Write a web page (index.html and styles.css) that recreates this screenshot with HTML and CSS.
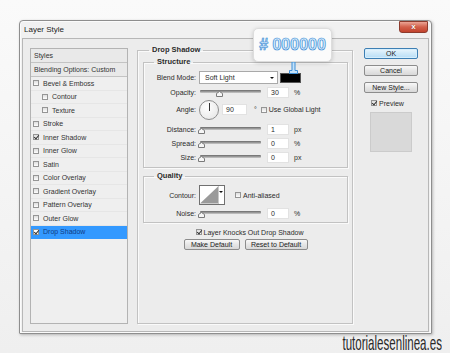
FILE: index.html
```html
<!DOCTYPE html>
<html lang="en">
<head>
  <meta charset="UTF-8">
  <meta name="viewport" content="width=device-width, initial-scale=1.0">
  <link rel="stylesheet" href="styles.css">
  <title>Layer Style</title>
</head>
<body>

<div class="window">
  <div class="titlebar">
    <span class="title">Layer Style</span>
    <span class="close">x</span>
  </div>

  <div class="client">
    <ul class="styles">
      <li class="head">Styles</li>
      <li class="head">Blending Options: Custom</li>
      <li><span class="cb"></span>Bevel &amp; Emboss</li>
      <li class="sub"><span class="cb"></span>Contour</li>
      <li class="sub"><span class="cb"></span>Texture</li>
      <li><span class="cb"></span>Stroke</li>
      <li><span class="cb on"></span>Inner Shadow</li>
      <li><span class="cb"></span>Inner Glow</li>
      <li><span class="cb"></span>Satin</li>
      <li><span class="cb"></span>Color Overlay</li>
      <li><span class="cb"></span>Gradient Overlay</li>
      <li><span class="cb"></span>Pattern Overlay</li>
      <li><span class="cb"></span>Outer Glow</li>
      <li class="selected"><span class="cb on"></span>Drop Shadow</li>
    </ul>

    <fieldset class="group main">
      <legend>Drop Shadow</legend>

      <fieldset class="group inner structure">
        <legend>Structure</legend>

        <div class="row blend">
          <label>Blend Mode:</label>
          <div class="select">Soft Light<span class="arrow"></span></div>
          <span class="swatch"></span>
        </div>

        <div class="row">
          <label>Opacity:</label>
          <div class="slider">
            <svg class="thumb" style="left: 30%" width="7" height="6" viewBox="0 0 7 6"><path d="M0.5 5.5V2.5L3.5 0.5L6.5 2.5V5.5Z" fill="#f6f6f6" stroke="#7a7a7a"/></svg>
          </div>
          <span class="num">30</span>
          <span class="unit">%</span>
        </div>

        <div class="row angle">
          <label>Angle:</label>
          <span class="dial"></span>
          <span class="num wide">90</span>
          <span class="deg">°</span>
          <span class="cb"></span><span class="cb-text">Use Global Light</span>
        </div>

        <div class="row distance">
          <label>Distance:</label>
          <div class="slider">
            <svg class="thumb" style="left: 0%" width="7" height="6" viewBox="0 0 7 6"><path d="M0.5 5.5V2.5L3.5 0.5L6.5 2.5V5.5Z" fill="#f6f6f6" stroke="#7a7a7a"/></svg>
          </div>
          <span class="num">1</span>
          <span class="unit">px</span>
        </div>

        <div class="row spread">
          <label>Spread:</label>
          <div class="slider">
            <svg class="thumb" style="left: 0%" width="7" height="6" viewBox="0 0 7 6"><path d="M0.5 5.5V2.5L3.5 0.5L6.5 2.5V5.5Z" fill="#f6f6f6" stroke="#7a7a7a"/></svg>
          </div>
          <span class="num">0</span>
          <span class="unit">%</span>
        </div>

        <div class="row size">
          <label>Size:</label>
          <div class="slider">
            <svg class="thumb" style="left: 0%" width="7" height="6" viewBox="0 0 7 6"><path d="M0.5 5.5V2.5L3.5 0.5L6.5 2.5V5.5Z" fill="#f6f6f6" stroke="#7a7a7a"/></svg>
          </div>
          <span class="num">0</span>
          <span class="unit">px</span>
        </div>
      </fieldset>

      <fieldset class="group inner quality">
        <legend>Quality</legend>

        <div class="row contour">
          <label>Contour:</label>
          <span class="curve">
            <svg width="19" height="18" viewBox="0 0 19 18"><path d="M0 18L19 0V18Z" fill="#9a9a9a"/></svg>
            <span class="arrow"></span>
          </span>
          <span class="cb"></span><span class="cb-text">Anti-aliased</span>
        </div>

        <div class="row noise">
          <label>Noise:</label>
          <div class="slider">
            <svg class="thumb" style="left: 0%" width="7" height="6" viewBox="0 0 7 6"><path d="M0.5 5.5V2.5L3.5 0.5L6.5 2.5V5.5Z" fill="#f6f6f6" stroke="#7a7a7a"/></svg>
          </div>
          <span class="num">0</span>
          <span class="unit">%</span>
        </div>
      </fieldset>

      <div class="knock">
        <span class="cb on"></span><span class="cb-text">Layer Knocks Out Drop Shadow</span>
      </div>

      <div class="defaults">
        <button class="btn make">Make Default</button>
        <button class="btn reset">Reset to Default</button>
      </div>
    </fieldset>

    <div class="side">
      <button class="btn ok">OK</button>
      <button class="btn">Cancel</button>
      <button class="btn">New Style...</button>
      <div class="preview-check">
        <span class="cb on"></span><span class="cb-text">Preview</span>
      </div>
      <div class="preview"></div>
    </div>
  </div>

  <div class="tip">
    # 000000
    <svg class="pointer" width="9" height="12" viewBox="0 0 9 12"><path d="M3 0H6V8.5H8.5V11.5H0.5V8.5H3Z" fill="#c4e2fa" stroke="#3f8fd6"/></svg>
  </div>
</div>

<div class="credit"><span>tutorialesenlinea.es</span></div>

</body>
</html>
```

FILE: styles.css
```css
* {
  box-sizing: border-box;
}

body {
  margin: 0;
  height: 353px;
  overflow: hidden;
  padding-top: 20px;
  background: linear-gradient(#fafafa, #efefef);
  font-family: 'Liberation Sans', Arial, sans-serif;
  font-size: 7px;
  color: #2b2b2b;
}

.window {
  position: relative;
  margin-left: 19px;
  width: 413px;
  height: 314px;
  border: 1px solid #8e8e8e;
  border-radius: 4px 4px 1px 1px;
  background: #f1f1f1;
  box-shadow: 1px 1px 3px rgba(0, 0, 0, 0.25), inset 0 0 0 1px #fbfbfb;
  display: flex;
  flex-direction: column;
}

.titlebar {
  height: 17px;
  display: flex;
  justify-content: space-between;
  align-items: flex-start;
  padding: 0 3px 0 4px;
}

.title {
  font-size: 8px;
  line-height: 17px;
  color: #1e1e1e;
}

.close {
  width: 29px;
  height: 12px;
  border: 1px solid #8d3b2d;
  border-radius: 0 0 3px 3px;
  background: linear-gradient(#eba595, #d2604b 50%, #c2432d);
  color: #fff;
  font-weight: bold;
  font-size: 8px;
  line-height: 9px;
  text-align: center;
  text-shadow: 0 0 1px #6b1d10;
}

.client {
  flex: 1;
  margin: 0 2px 1px 2px;
  border: 1px solid #b7b7b7;
  background: #ececec;
  display: flex;
  padding: 9px 8px 7px 7px;
}

/* styles list */
.styles {
  list-style: none;
  margin: 0;
  padding: 0;
  width: 98px;
  border: 1px solid #b3b3b3;
  background: #efefef;
  color: #333;
}

.styles li {
  height: 13.5px;
  display: flex;
  align-items: center;
  padding-left: 2px;
  border-bottom: 1px solid #e6e6e6;
}

.styles li.head {
  height: 14px;
  padding-left: 3px;
  background: #e9e9e9;
  border-bottom: 1px solid #c3c3c3;
}

.styles li.sub {
  padding-left: 11px;
}

.styles li .cb {
  margin-right: 4px;
}

.styles li.selected {
  background: #3399ff;
  color: #113c84;
  border-bottom-color: #3399ff;
}

.cb {
  position: relative;
  display: inline-block;
  width: 6px;
  height: 6px;
  flex: none;
  border: 1px solid #959595;
  background: linear-gradient(#dedede, #fdfdfd);
}

.cb.on::after {
  content: '';
  position: absolute;
  left: 1px;
  top: -1px;
  width: 2px;
  height: 4px;
  border-right: 1px solid #333;
  border-bottom: 1px solid #333;
  transform: rotate(40deg);
}

.selected .cb {
  background: #fff;
}

.cb-text {
  margin-left: 2px;
}

/* group boxes */
fieldset.group {
  margin: 0;
  min-width: 0;
  border: 1px solid #c2c2c2;
  box-shadow: 1px 1px 0 #fafafa, inset 1px 1px 0 #fafafa;
}

fieldset.group legend {
  padding: 0 3px;
  font-weight: bold;
  font-size: 7.5px;
  line-height: 10px;
}

.main {
  width: 216px;
  margin: -3px 0 0 9px !important;
  padding: 0 4px 0 5px;
}

.main > legend {
  margin-left: 6px;
}

.inner {
  padding: 4px 0 4px 0;
}

.inner > legend {
  margin-left: 10px;
}

.structure {
  margin-top: 2px !important;
}

.quality {
  margin-top: 3px !important;
  padding-bottom: 3px;
}

.row {
  display: flex;
  align-items: center;
  height: 12px;
  margin-bottom: 1px;
}

.row label {
  width: 52px;
  margin-right: 3px;
  text-align: right;
}

.row.blend {
  height: 13px;
  margin-bottom: 2px;
}

.row.angle {
  height: 21px;
  margin-top: 1px;
  margin-bottom: 3px;
}

.row.distance,
.row.spread {
  margin-bottom: 2px;
}

.row.size,
.row.noise {
  margin-bottom: 0;
}

.row.contour {
  height: 20px;
  margin-bottom: 2px;
}

.select {
  position: relative;
  width: 79px;
  height: 13px;
  border: 1px solid #a9a9a9;
  background: #fff;
  padding-left: 5px;
  line-height: 11px;
}

.arrow {
  position: absolute;
  right: 3px;
  top: 5px;
  border-left: 2px solid transparent;
  border-right: 2px solid transparent;
  border-top: 2px solid #111;
}

.swatch {
  width: 21px;
  height: 10px;
  margin-left: 2px;
  background: #000;
  border: 1px solid #555;
}

.slider {
  position: relative;
  width: 61px;
  height: 12px;
  margin-left: 1px;
}

.slider::before {
  content: '';
  position: absolute;
  left: 0;
  right: 0;
  top: 4px;
  height: 3px;
  border-radius: 1px;
  background: linear-gradient(#6a6a6a, #a0a0a0 60%, #cdcdcd);
}

.thumb {
  position: absolute;
  top: 5px;
  margin-left: -2px;
}

.num {
  width: 22px;
  height: 11px;
  margin-left: 6px;
  padding-left: 3px;
  line-height: 9px;
  color: #2b2b2b;
  background: #fff;
  border: 1px solid #e2e2e2;
}

.num.wide {
  width: 25px;
  margin-left: 3px;
}

.unit {
  margin-left: 5px;
}

.dial {
  position: relative;
  width: 20px;
  height: 20px;
  border-radius: 50%;
  border: 1px solid #8e8e8e;
  background: radial-gradient(circle at 40% 35%, #fff, #e3e3e3);
}

.dial::after {
  content: '';
  position: absolute;
  left: 9px;
  top: 2px;
  width: 1px;
  height: 8px;
  background: #333;
}

.deg {
  margin-left: 7px;
  margin-right: 4px;
}

.curve {
  position: relative;
  display: flex;
  width: 26px;
  height: 20px;
  border: 1px solid #707070;
  background: #fff;
}

.curve .arrow {
  top: 5px;
  right: 1px;
}

.curve svg {
  border-right: 1px solid #c9c9c9;
}

.contour .cb {
  margin-left: 10px;
}

.knock {
  display: flex;
  align-items: center;
  justify-content: center;
  height: 10px;
  margin-top: 4px;
  padding-left: 8px;
}

.defaults {
  display: flex;
  justify-content: center;
  gap: 5px;
  margin-top: 2px;
}

.btn {
  height: 11px;
  padding: 0;
  font-family: 'Liberation Sans', Arial, sans-serif;
  font-size: 7px;
  line-height: 9px;
  color: #222;
  border: 1px solid #8c8c8c;
  border-radius: 2px;
  background: linear-gradient(#f8f8f8, #e6e6e6 50%, #d8d8d8);
}

.btn.make {
  width: 56px;
}

.btn.reset {
  width: 63px;
}

/* right column */
.side {
  width: 54px;
  margin-left: 11px;
  display: flex;
  flex-direction: column;
}

.side .btn {
  width: 54px;
  margin-bottom: 6px;
}

.btn.ok {
  border-color: #3d7fb4;
  background: linear-gradient(#eaf6fd, #cfe9f9 50%, #b8def6);
  box-shadow: inset 0 0 0 1px #d6eefc;
}

.preview-check {
  display: flex;
  align-items: center;
  height: 10px;
  margin-top: -1px;
  padding-left: 7px;
}

.preview {
  width: 42px;
  height: 40px;
  margin: 4px 0 0 6px;
  background: #d9d9d9;
  border: 1px solid #cbcbcb;
}

/* color tooltip */
.tip {
  position: absolute;
  left: 233px;
  top: 7px;
  width: 79px;
  height: 34px;
  border: 1px solid #dddddd;
  border-radius: 5px;
  background: #fbfbfb;
  box-shadow: 0 1px 4px rgba(0, 0, 0, 0.18);
  text-align: center;
  font-size: 16px;
  font-weight: bold;
  line-height: 31px;
  color: #d6ecfd;
  -webkit-text-stroke: 0.6px #3a8bd4;
  text-shadow: 0 0 1px #7fb8ea;
}

.pointer {
  position: absolute;
  left: 35px;
  top: 33px;
}

/* watermark */
.credit {
  margin-top: -1px;
  padding-right: 8px;
  text-align: right;
  font-size: 21px;
  line-height: 20px;
  color: #2a2a2a;
}

.credit span {
  display: inline-block;
  transform: scaleX(0.55);
  transform-origin: right;
}
```
